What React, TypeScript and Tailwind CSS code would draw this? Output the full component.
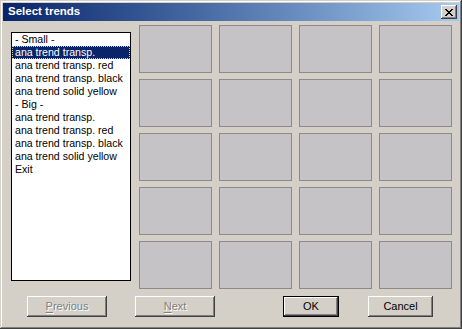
import React from "react";

const items = [
  "- Small -",
  "ana trend transp.",
  "ana trend transp. red",
  "ana trend transp. black",
  "ana trend solid yellow",
  "- Big -",
  "ana trend transp.",
  "ana trend transp. red",
  "ana trend transp. black",
  "ana trend solid yellow",
  "Exit",
];

const raised =
  "shadow-[inset_-1px_-1px_#404040,inset_1px_1px_#ffffff,inset_-2px_-2px_#808080,inset_2px_2px_#d4d0c8]";

function CloseGlyph() {
  // 8x7 pixel X like the classic caption button
  return (
    <svg width="8" height="7" viewBox="0 0 8 7" shapeRendering="crispEdges">
      <path
        fill="#000"
        d="M0 0h2v1H0zM6 0h2v1H6zM1 1h2v1H1zM5 1h2v1H5zM2 2h4v1H2zM3 3h2v1H3zM2 4h4v1H2zM1 5h2v1H1zM5 5h2v1H5zM0 6h2v1H0zM6 6h2v1H6z"
      />
    </svg>
  );
}

function Btn({
  label,
  width,
  disabled,
  isDefault,
  underline,
}: {
  label: string;
  width: string;
  disabled?: boolean;
  isDefault?: boolean;
  underline?: boolean;
}) {
  const text = (
    <span
      className={
        disabled
          ? "text-[#808080] [text-shadow:1px_1px_0_#ffffff]"
          : "text-black"
      }
    >
      {underline ? (
        <>
          <span className="underline underline-offset-2">{label[0]}</span>
          {label.slice(1)}
        </>
      ) : (
        label
      )}
    </span>
  );
  if (isDefault) {
    return (
      <div className={`${width} h-[21px] border border-black`}>
        <div className={`h-full flex items-center justify-center bg-[#d4d0c8] ${raised}`}>
          {text}
        </div>
      </div>
    );
  }
  return (
    <div className={`${width} h-[21px] flex items-center justify-center bg-[#d4d0c8] ${raised}`}>
      {text}
    </div>
  );
}

export default function App() {
  const cells = Array.from({ length: 20 });

  return (
    <div
      className="w-[462px] h-[329px] bg-[#d4d0c8] p-[3px] flex flex-col shadow-[inset_-1px_-1px_#404040,inset_1px_1px_#d4d0c8,inset_-2px_-2px_#808080,inset_2px_2px_#ffffff]"
      style={{ fontFamily: "'Liberation Sans', Arial, sans-serif" }}
    >
      {/* Title bar */}
      <div className="h-[18px] flex items-center justify-between bg-gradient-to-r from-[#0a246a] to-[#a6caf0] pl-[5px] pr-[2px]">
        <span className="text-white font-bold text-[11.5px] leading-none">Select trends</span>
        <div className={`w-[16px] h-[14px] bg-[#d4d0c8] flex items-center justify-center ${raised}`}>
          <CloseGlyph />
        </div>
      </div>

      {/* Body */}
      <div className="flex items-start pl-[8px] pt-[4px]">
        <div className="mt-[7px] w-[120px] h-[249px] bg-white border border-black text-[10.6px] leading-[13px] text-black">
          {items.map((it, i) => (
            <div
              key={i}
              className={
                i === 1
                  ? "h-[13px] pl-[3px] bg-[#0a246a] text-white outline outline-1 outline-dotted outline-[#e8d070] -outline-offset-1 whitespace-nowrap"
                  : "h-[13px] pl-[3px] whitespace-nowrap"
              }
            >
              {it}
            </div>
          ))}
        </div>

        <div className="ml-[8px] grid grid-cols-[repeat(4,73px)] grid-rows-[repeat(5,48px)] gap-x-[7px] gap-y-[6px]">
          {cells.map((_, i) => (
            <div key={i} className="bg-[#c6c3c6] border border-[#8c8a8c]" />
          ))}
        </div>
      </div>

      {/* Buttons */}
      <div className="flex items-center mt-[7px] text-[11px]">
        <div className="ml-[24px]">
          <Btn label="Previous" width="w-[80px]" disabled underline />
        </div>
        <div className="ml-[28px]">
          <Btn label="Next" width="w-[80px]" disabled underline />
        </div>
        <div className="ml-[68px]">
          <Btn label="OK" width="w-[56px]" isDefault />
        </div>
        <div className="ml-[29px]">
          <Btn label="Cancel" width="w-[65px]" />
        </div>
      </div>
    </div>
  );
}
